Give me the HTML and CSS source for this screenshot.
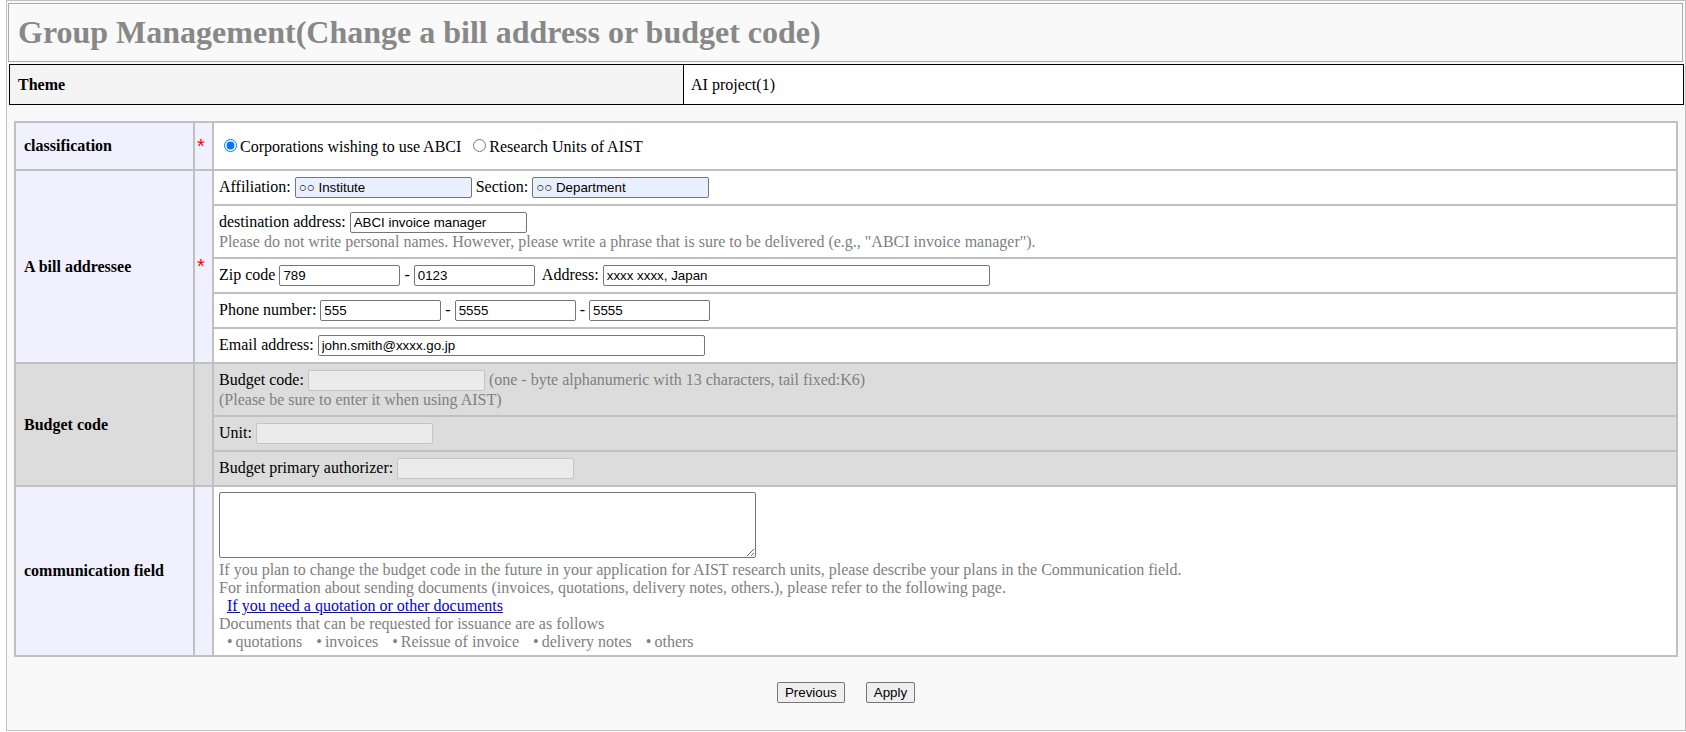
FILE: index.html
```html
<!DOCTYPE html>
<html lang="en">
<head>
<meta charset="utf-8">
<title>Group Management</title>
<link rel="stylesheet" href="styles.css">
</head>
<body>
<div class="page">
  <div class="head"><h1>Group Management(Change a bill address or budget code)</h1></div>
  <table class="theme">
    <tr><th>Theme</th><td>AI project(1)</td></tr>
  </table>
  <table class="form">
    <tr>
      <th>classification</th>
      <td class="req"><span class="star">*</span></td>
      <td class="val">
        <div class="cls">
          <label class="opt"><input type="radio" name="cls" checked>Corporations wishing to use ABCI</label>
          <label class="opt"><input type="radio" name="cls">Research Units of AIST</label>
        </div>
      </td>
    </tr>
    <tr>
      <th>A bill addressee</th>
      <td class="req"><span class="star">*</span></td>
      <td class="val">
        <div class="sub">Affiliation: <input class="in w177 auto" type="text" value="○○ Institute"> Section: <input class="in w177 auto" type="text" value="○○ Department"></div>
        <div class="sub">destination address: <input class="in w177" type="text" value="ABCI invoice manager"><br><span class="note">Please do not write personal names. However, please write a phrase that is sure to be delivered (e.g., "ABCI invoice manager").</span></div>
        <div class="sub">Zip code <input class="in w121" type="text" value="789"> - <input class="in w121" type="text" value="0123"><span class="gap"></span> Address: <input class="in w387" type="text" value="xxxx xxxx, Japan"></div>
        <div class="sub">Phone number: <input class="in w121" type="text" value="555"> - <input class="in w121" type="text" value="5555"> - <input class="in w121" type="text" value="5555"></div>
        <div class="sub">Email address: <input class="in w387" type="text" value="john.smith@xxxx.go.jp"></div>
      </td>
    </tr>
    <tr class="dis">
      <th>Budget code</th>
      <td class="req"></td>
      <td class="val">
        <div class="sub">Budget code: <input class="in w177" type="text" disabled> <span class="note">(one - byte alphanumeric with 13 characters, tail fixed:K6)</span><br><span class="note">(Please be sure to enter it when using AIST)</span></div>
        <div class="sub">Unit: <input class="in w177" type="text" disabled></div>
        <div class="sub">Budget primary authorizer: <input class="in w177" type="text" disabled></div>
      </td>
    </tr>
    <tr>
      <th>communication field</th>
      <td class="req"></td>
      <td class="val">
        <div class="comm">
          <textarea class="ta"></textarea>
          <div class="note">If you plan to change the budget code in the future in your application for AIST research units, please describe your plans in the Communication field.</div>
          <div class="note">For information about sending documents (invoices, quotations, delivery notes, others.), please refer to the following page.</div>
          <div class="linkline"><a href="#">If you need a quotation or other documents</a></div>
          <div class="note">Documents that can be requested for issuance are as follows</div>
          <div class="note docs"><span class="doc"><span class="dot">•</span>quotations</span><span class="doc"><span class="dot">•</span>invoices</span><span class="doc"><span class="dot">•</span>Reissue of invoice</span><span class="doc"><span class="dot">•</span>delivery notes</span><span class="doc"><span class="dot">•</span>others</span></div>
        </div>
      </td>
    </tr>
  </table>
  <div class="actions">
    <button type="button" class="btn">Previous</button>
    <button type="button" class="btn">Apply</button>
  </div>
</div>
</body>
</html>
```

FILE: styles.css
```css
* { box-sizing: border-box; }

body {
  margin: 0;
  background: #fff;
  color: #000;
  font-family: "Liberation Serif", "Times New Roman", serif;
  font-size: 16px;
}

.page {
  margin-left: 6px;
  width: 1680px;
  height: 731px;
  border: 1px solid #c0c0c0;
  background: #f9f9f9;
}

.head {
  margin: 2px 2px 0 1px;
  border: 1px solid #aaa;
  background: #f9f9f9;
  padding: 10px 9px;
}

.head h1 {
  margin: 0;
  font-size: 32px;
  line-height: 37px;
  font-weight: bold;
  color: #888;
}

.theme {
  margin: 2px 1px 0 2px;
  width: 1675px;
  border: 1px solid #000;
  border-spacing: 0;
  background: #fff;
}

.theme th {
  width: 673px;
  height: 39px;
  padding: 0 8px;
  text-align: left;
  background: #f4f4f4;
}

.theme td {
  border-left: 1px solid #000;
  padding: 0 7px;
}

.form {
  margin: 16px 7px 0;
  width: 1664px;
  border: 2px solid #c0c0c0;
  border-spacing: 0;
  table-layout: fixed;
  background: #fff;
}

.form th,
.form td {
  padding: 0;
  vertical-align: middle;
}

.form tr + tr > th,
.form tr + tr > td {
  border-top: 2px solid #c0c0c0;
}

.form th {
  width: 177px;
  padding: 0 8px;
  text-align: left;
  background: #f0f0ff;
}

.form .req {
  width: 19px;
  border-left: 2px solid #c0c0c0;
  background: #f0f0ff;
  padding-left: 2px;
}

.star {
  color: #f00;
  font-family: "Liberation Sans", Arial, sans-serif;
  font-size: 20px;
}

.form .val {
  border-left: 2px solid #c0c0c0;
}

.form .dis th,
.form .dis td {
  background: #dcdcdc;
}

.cls {
  height: 46px;
  display: flex;
  align-items: center;
  padding: 0 5px;
}

.opt { margin-right: 7px; }

.opt input { margin: 3px 3px 0 5px; }

.sub { padding: 6px 5px; }

.sub + .sub { border-top: 2px solid #c0c0c0; }

.gap { display: inline-block; width: 4px; }

.note { color: #808080; }

.in {
  font-family: "Liberation Sans", Arial, sans-serif;
  font-size: 13.33px;
  height: 21px;
  margin: 0;
  padding: 1px 3px;
  border: 1px solid #767676;
  border-radius: 2px;
  background: #fff;
  color: #000;
  vertical-align: baseline;
}

.in.auto { background: #e8f0fe; }

.in:disabled {
  background: #ebebeb;
  border-color: #c4c4c4;
}

.w177 { width: 177px; }
.w121 { width: 121px; }
.w387 { width: 387px; }

.comm { padding: 5px 5px 4px; }

.ta {
  display: block;
  width: 537px;
  height: 66px;
  margin: 0 0 3px;
  border: 1px solid #767676;
  border-radius: 2px;
  font-family: "Liberation Mono", monospace;
  font-size: 13.33px;
  background: #fff;
}

.linkline { padding-left: 8px; }

.linkline a { color: #0000ee; text-decoration: underline; }

.docs { padding-left: 8px; }

.doc { margin-right: 14px; }

.dot { margin-right: 3px; }

.actions {
  display: flex;
  justify-content: center;
  gap: 21px;
  margin-top: 25px;
}

.btn {
  font-family: "Liberation Sans", Arial, sans-serif;
  font-size: 13.33px;
  height: 21px;
  padding: 1px 7px;
  border: 1px solid #767676;
  border-radius: 2px;
  background: #efefef;
  color: #000;
}
```
